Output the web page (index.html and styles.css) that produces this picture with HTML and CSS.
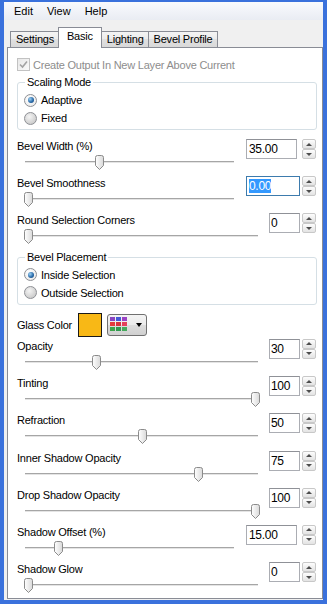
FILE: index.html
```html
<!DOCTYPE html>
<html lang="en">
<head>
    <meta charset="UTF-8">
    <title>Glass Bevel</title>
    <link rel="stylesheet" href="styles.css">
</head>
<body>
    <svg class="defs" width="0" height="0">
        <defs>
            <linearGradient id="thumb-fill" x1="0" y1="0" x2="1" y2="0">
                <stop offset="0" stop-color="#ffffff"/>
                <stop offset="1" stop-color="#d9d9d9"/>
            </linearGradient>
            <symbol id="thumb" viewBox="0 0 9 15">
                <path d="M0.5 2.5 Q0.5 0.5 2.5 0.5 H6.5 Q8.5 0.5 8.5 2.5 V10.5 L4.5 14.5 L0.5 10.5 Z" fill="url(#thumb-fill)" stroke="#8b8b8b"/>
            </symbol>
        </defs>
    </svg>

    <div class="window">
        <div class="menubar">
            <span>Edit</span>
            <span>View</span>
            <span>Help</span>
        </div>

        <div class="tabs">
            <div class="tab">Settings</div>
            <div class="tab active">Basic</div>
            <div class="tab">Lighting</div>
            <div class="tab">Bevel Profile</div>
        </div>

        <div class="panel">
            <div class="check disabled">
                <span class="box"><svg width="11" height="11" viewBox="0 0 11 11"><polyline points="2,5.5 4.5,8 9,2.5" fill="none" stroke="#a3a3a3" stroke-width="1.6"/></svg></span>
                Create Output In New Layer Above Current
            </div>

            <fieldset class="group">
                <legend>Scaling Mode</legend>
                <div class="option"><span class="radio on"></span>Adaptive</div>
                <div class="option"><span class="radio"></span>Fixed</div>
            </fieldset>

            <div class="control">
                <div class="control-main">
                    <div class="label">Bevel Width (%)</div>
                    <div class="slider"><span class="thumb" style="left: calc((100% - 9px) * 0.35)"><svg width="9" height="15"><use href="#thumb"/></svg></span></div>
                </div>
                <div class="num wide">35.00</div>
                <div class="spin"><span class="up"></span><span class="down"></span></div>
            </div>

            <div class="control">
                <div class="control-main">
                    <div class="label">Bevel Smoothness</div>
                    <div class="slider"><span class="thumb" style="left: 0"><svg width="9" height="15"><use href="#thumb"/></svg></span></div>
                </div>
                <div class="num wide focus"><span class="sel">0.00</span></div>
                <div class="spin"><span class="up"></span><span class="down"></span></div>
            </div>

            <div class="control">
                <div class="control-main">
                    <div class="label">Round Selection Corners</div>
                    <div class="slider"><span class="thumb" style="left: 0"><svg width="9" height="15"><use href="#thumb"/></svg></span></div>
                </div>
                <div class="num">0</div>
                <div class="spin"><span class="up"></span><span class="down"></span></div>
            </div>

            <fieldset class="group">
                <legend>Bevel Placement</legend>
                <div class="option"><span class="radio on"></span>Inside Selection</div>
                <div class="option"><span class="radio"></span>Outside Selection</div>
            </fieldset>

            <div class="color-row">
                Glass Color
                <span class="swatch"></span>
                <span class="picker">
                    <svg width="17" height="15" viewBox="0 0 17 15">
                        <rect x="0" y="0" width="5" height="4" fill="#8a45c2"/>
                        <rect x="6" y="0" width="5" height="4" fill="#4659d6"/>
                        <rect x="12" y="0" width="5" height="4" fill="#9b43c4"/>
                        <rect x="0" y="5" width="5" height="4" fill="#e53a3c"/>
                        <rect x="6" y="5" width="5" height="4" fill="#d8333f"/>
                        <rect x="12" y="5" width="5" height="4" fill="#e4405a"/>
                        <rect x="0" y="10" width="5" height="4" fill="#3ea44c"/>
                        <rect x="6" y="10" width="5" height="4" fill="#2f9a4f"/>
                        <rect x="12" y="10" width="5" height="4" fill="#45a95c"/>
                    </svg>
                    <span class="caret"></span>
                </span>
            </div>

            <div class="control">
                <div class="control-main">
                    <div class="label">Opacity</div>
                    <div class="slider"><span class="thumb" style="left: calc((100% - 9px) * 0.30)"><svg width="9" height="15"><use href="#thumb"/></svg></span></div>
                </div>
                <div class="num">30</div>
                <div class="spin"><span class="up"></span><span class="down"></span></div>
            </div>

            <div class="control">
                <div class="control-main">
                    <div class="label">Tinting</div>
                    <div class="slider"><span class="thumb" style="left: calc((100% - 9px) * 1)"><svg width="9" height="15"><use href="#thumb"/></svg></span></div>
                </div>
                <div class="num">100</div>
                <div class="spin"><span class="up"></span><span class="down"></span></div>
            </div>

            <div class="control">
                <div class="control-main">
                    <div class="label">Refraction</div>
                    <div class="slider"><span class="thumb" style="left: calc((100% - 9px) * 0.50)"><svg width="9" height="15"><use href="#thumb"/></svg></span></div>
                </div>
                <div class="num">50</div>
                <div class="spin"><span class="up"></span><span class="down"></span></div>
            </div>

            <div class="control">
                <div class="control-main">
                    <div class="label">Inner Shadow Opacity</div>
                    <div class="slider"><span class="thumb" style="left: calc((100% - 9px) * 0.75)"><svg width="9" height="15"><use href="#thumb"/></svg></span></div>
                </div>
                <div class="num">75</div>
                <div class="spin"><span class="up"></span><span class="down"></span></div>
            </div>

            <div class="control">
                <div class="control-main">
                    <div class="label">Drop Shadow Opacity</div>
                    <div class="slider"><span class="thumb" style="left: calc((100% - 9px) * 1)"><svg width="9" height="15"><use href="#thumb"/></svg></span></div>
                </div>
                <div class="num">100</div>
                <div class="spin"><span class="up"></span><span class="down"></span></div>
            </div>

            <div class="control">
                <div class="control-main">
                    <div class="label">Shadow Offset (%)</div>
                    <div class="slider"><span class="thumb" style="left: calc((100% - 9px) * 0.15)"><svg width="9" height="15"><use href="#thumb"/></svg></span></div>
                </div>
                <div class="num wide">15.00</div>
                <div class="spin"><span class="up"></span><span class="down"></span></div>
            </div>

            <div class="control">
                <div class="control-main">
                    <div class="label">Shadow Glow</div>
                    <div class="slider"><span class="thumb" style="left: 0"><svg width="9" height="15"><use href="#thumb"/></svg></span></div>
                </div>
                <div class="num">0</div>
                <div class="spin"><span class="up"></span><span class="down"></span></div>
            </div>
        </div>
    </div>
</body>
</html>
```

FILE: styles.css
```css
html, body {
    margin: 0;
    height: 100%;
}

body {
    box-sizing: border-box;
    padding: 2px 4px 4px;
    background-color: #3a71dc;
    font-family: "Liberation Sans", Arial, sans-serif;
    font-size: 11px;
    letter-spacing: -0.22px;
    color: #000;
}

.defs {
    position: absolute;
    width: 0;
    height: 0;
    overflow: hidden;
}

.window {
    height: 598px;
    display: flex;
    flex-direction: column;
    background-color: #f0f0f0;
}

/* menu */
.menubar {
    height: 18px;
    line-height: 18px;
    display: flex;
    padding-left: 3px;
    background: linear-gradient(#f9fafd, #e9ecf3);
    letter-spacing: 0;
}

.menubar span {
    padding: 0 7px;
}

/* tabs */
.tabs {
    height: 27px;
    flex: none;
    display: flex;
    align-items: flex-end;
    padding-left: 6px;
}

.tab {
    height: 15px;
    line-height: 15px;
    padding: 0 4px 0 5px;
    margin-left: -1px;
    border: 1px solid #898c95;
    border-bottom: none;
    background: linear-gradient(#f4f4f4, #ebebeb 50%, #e0e0e0 50%, #d9d9d9);
}

.tab:first-child {
    margin-left: 0;
}

.tab.active {
    position: relative;
    z-index: 1;
    padding: 1px 8px 4px;
    margin-bottom: -1px;
    background: #fff;
}

.panel {
    flex: 1;
    margin: 0 0 1px 3px;
    padding: 9px 5px 0 9px;
    border: 1px solid #898c95;
    background-color: #fff;
}

/* checkbox */
.check {
    display: flex;
    align-items: center;
    height: 15px;
    white-space: nowrap;
}

.check.disabled {
    color: #8d8d8d;
}

.check .box {
    box-sizing: border-box;
    width: 13px;
    height: 13px;
    margin-right: 3px;
    border: 1px solid #c2c2c2;
    background: linear-gradient(135deg, #e8e8e8, #fafafa);
}

.check .box svg {
    display: block;
}

/* group boxes */
.group {
    margin: 3px 0 0;
    padding: 1px 0 2px 6px;
    min-width: 0;
    border: 1px solid #d5dfe5;
    border-radius: 3px;
}

.group legend {
    padding: 0 2px;
    margin-left: 1px;
    line-height: 15px;
}

.option {
    display: flex;
    align-items: center;
    height: 18px;
}

.radio {
    position: relative;
    box-sizing: border-box;
    width: 13px;
    height: 13px;
    margin-right: 4px;
    border: 1px solid #8e9095;
    border-radius: 50%;
    background: radial-gradient(circle at 40% 35%, #f4f4f4, #cfcfcf 70%, #c4c4c4);
}

.radio.on {
    background: radial-gradient(circle at 40% 35%, #ffffff, #e6e6e6);
}

.radio.on::after {
    content: "";
    position: absolute;
    left: 2.5px;
    top: 2.5px;
    width: 6px;
    height: 6px;
    border-radius: 50%;
    background: radial-gradient(circle at 35% 35%, #9fd2f3, #2b6cab 55%, #123f70);
}

/* slider rows */
.control {
    display: flex;
    align-items: flex-start;
    margin-top: 5.2px;
}

.group + .control {
    margin-top: 9px;
}

.control + .group {
    margin-top: 4.6px;
}

.color-row + .control {
    margin-top: 2px;
}

.control-main {
    flex: 1;
    min-width: 0;
    margin-right: 9px;
}

.label {
    line-height: 15px;
    white-space: nowrap;
}

.slider {
    position: relative;
    height: 17px;
    margin-left: 7px;
    background:
        linear-gradient(#a6a6a6, #a6a6a6) 1px 7px / calc(100% - 3px) 1px no-repeat,
        linear-gradient(#e4e4e4, #e4e4e4) 1px 8px / calc(100% - 3px) 1px no-repeat;
}

.thumb {
    position: absolute;
    top: 1px;
    width: 9px;
    height: 15px;
}

.thumb svg {
    display: block;
}

.num {
    box-sizing: border-box;
    width: 31px;
    height: 20px;
    margin-right: 2px;
    padding-left: 1px;
    border: 1px solid #abadb3;
    border-top-color: #8f9197;
    background-color: #fff;
    font-size: 12px;
    line-height: 18px;
    letter-spacing: -0.3px;
}

.num.wide {
    width: 51px;
    margin-left: 1px;
    margin-right: 5px;
    padding-left: 2px;
}

.num.focus {
    width: 54px;
    margin-right: 2px;
    border-color: #3d7bad;
}

.num .sel {
    background-color: #3399ff;
    color: #fff;
}

.spin {
    display: flex;
    flex-direction: column;
    width: 14px;
    height: 20px;
    margin-right: 1px;
}

.spin span {
    flex: 1;
    display: flex;
    align-items: center;
    justify-content: center;
    border: 1px solid #c8c8c8;
    border-radius: 2px;
    background: linear-gradient(#fdfdfd, #e3e3e3);
}

.spin span::after {
    content: "";
    border-left: 3px solid transparent;
    border-right: 3px solid transparent;
}

.spin .up::after {
    border-bottom: 3px solid #4d4d4d;
}

.spin .down::after {
    border-top: 3px solid #4d4d4d;
}

/* glass color */
.color-row {
    display: flex;
    align-items: center;
    height: 24px;
    margin-top: 8px;
    white-space: nowrap;
}

.swatch {
    box-sizing: border-box;
    width: 24px;
    height: 24px;
    margin-left: 6px;
    border: 1px solid #1a1a1a;
    background-color: #f8b816;
}

.picker {
    box-sizing: border-box;
    display: flex;
    align-items: center;
    width: 40px;
    height: 22px;
    margin-left: 5px;
    padding-left: 2px;
    border: 1px solid #707070;
    border-radius: 3px;
    background: linear-gradient(#f4f4f4, #ebebeb 50%, #dddddd 50%, #d0d0d0);
}

.picker svg {
    display: block;
}

.caret {
    margin-left: 9px;
    border-left: 3px solid transparent;
    border-right: 3px solid transparent;
    border-top: 4px solid #000;
}
```
